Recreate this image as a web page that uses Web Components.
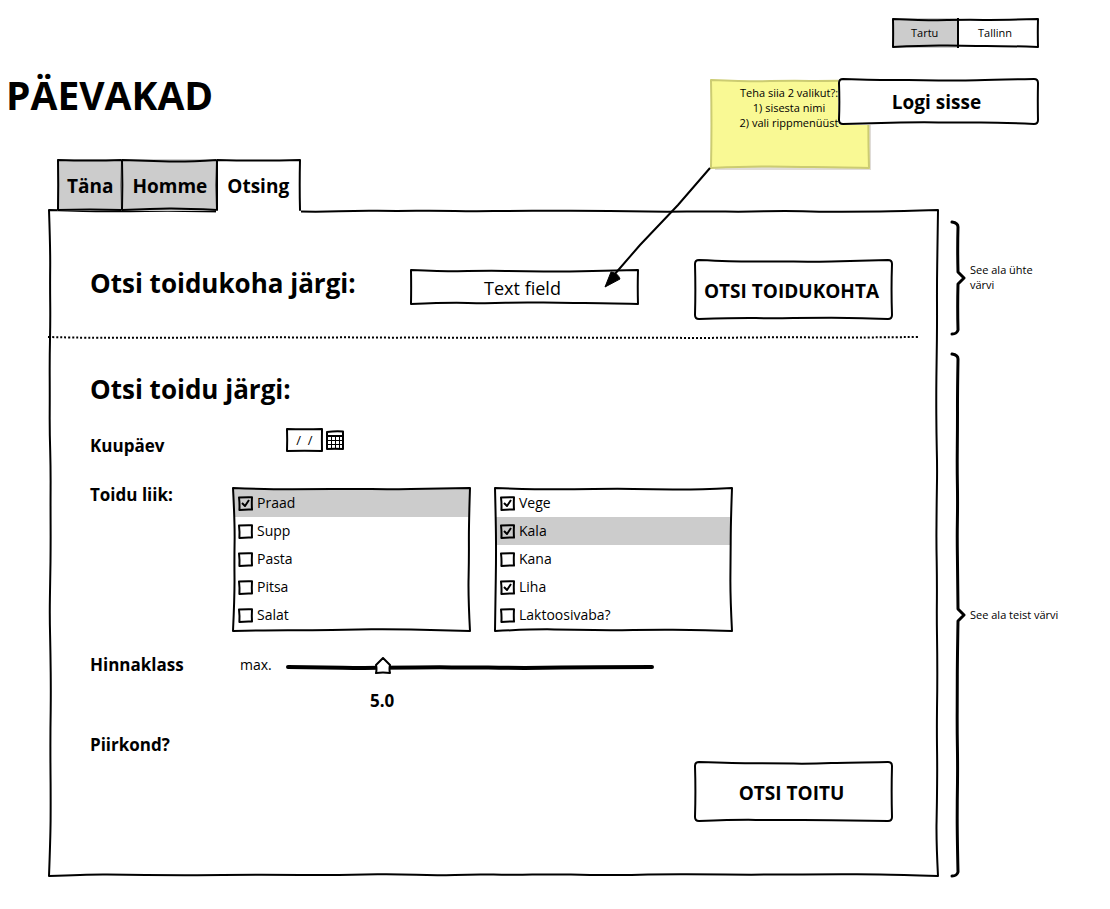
<!DOCTYPE html>
<html lang="et">
<head>
<meta charset="utf-8">
<title>Päevakad</title>
<style>
  body { margin: 0; background: #fff; color: #000; font-family: "Open Sans", "Noto Sans", sans-serif; }
</style>
</head>
<body>
<paevakad-page></paevakad-page>

<template id="page-template">
  <style>
    :host { display: block; padding: 18px 0 32px; }
    header { display: grid; grid-template-columns: 1fr auto auto; padding-right: 71px; padding-left: 6px; row-gap: 30px; }
    city-toggle { grid-column: 3; justify-self: end; width: 147px; }
    h1 { margin: 0; font-size: 39px; line-height: 34px; font-weight: 700; grid-row: 2; }
    sticky-note { grid-row: 2; margin-right: -32px; }
    .login { grid-row: 2; grid-column: 3; width: 201px; height: 47px; z-index: 1; }
    main { display: grid; grid-template-columns: 1fr 171px; padding-left: 48px; margin-top: 34px; }
    nav { grid-column: 1 / -1; display: flex; padding-left: 9px; margin-bottom: -2px; z-index: 1; }
    .panel { position: relative; }
    .place { display: grid; grid-template-columns: 320px 1fr 199px; padding: 50px 46px 17px 42px; align-items: start; }
    .place sketch-field { margin: 10px 55px 0 0; }
    h2 { margin: 0; font-size: 26px; line-height: 36px; font-weight: 700; }
    .place h2 { padding-top: 6px; }
    .food { padding: 33px 46px 55px 42px; display: flex; flex-direction: column; }
    .place sketch-button, .submit { height: 61px; }
    .submit { width: 199px; align-self: flex-end; margin-top: 4px; }
    form-row.date { margin-top: 21px; }
    form-row.kind { margin-top: 25px; }
    form-row.price { margin-top: 21px; }
    form-row.area { margin-top: 20px; }
    .lists { display: flex; gap: 23px; padding-top: 4px; }
    .lists check-list { flex: 0 1 239px; }
    .date-box { padding-left: 54px; height: 30px; display: flex; gap: 3px; }
    aside { display: flex; flex-direction: column; gap: 18px; padding: 12px 0 0 11px; }
    brace-note.tall { flex: 1; }
    brace-note.short { height: 114px; }
  </style>
  <header>
    <city-toggle></city-toggle>
    <h1>PÄEVAKAD</h1>
    <sticky-note>Teha siia 2 valikut?:<br>1) sisesta nimi<br>2) vali rippmenüüst</sticky-note>
    <sketch-button class="login" size="large" seed="3">Logi sisse</sketch-button>
  </header>
  <main>
    <nav>
      <sketch-tab seed="1">Täna</sketch-tab>
      <sketch-tab seed="4">Homme</sketch-tab>
      <sketch-tab seed="6" active>Otsing</sketch-tab>
    </nav>
    <sketch-frame class="panel" seed="9">
      <section class="place">
        <h2>Otsi toidukoha järgi:</h2>
        <sketch-field value="Text field" label="Otsi toidukoha järgi"></sketch-field>
        <sketch-button seed="5">OTSI TOIDUKOHTA</sketch-button>
      </section>
      <dotted-rule></dotted-rule>
      <section class="food">
        <h2>Otsi toidu järgi:</h2>
        <form-row class="date" label="Kuupäev" end>
          <date-field class="date-box"></date-field>
        </form-row>
        <form-row class="kind" label="Toidu liik:">
          <div class="lists">
            <check-list seed="2">
              <check-item checked selected>Praad</check-item>
              <check-item>Supp</check-item>
              <check-item>Pasta</check-item>
              <check-item>Pitsa</check-item>
              <check-item>Salat</check-item>
            </check-list>
            <check-list seed="7">
              <check-item checked>Vege</check-item>
              <check-item checked selected>Kala</check-item>
              <check-item>Kana</check-item>
              <check-item checked>Liha</check-item>
              <check-item>Laktoosivaba?</check-item>
            </check-list>
          </div>
        </form-row>
        <form-row class="price" label="Hinnaklass">
          <price-slider></price-slider>
        </form-row>
        <form-row class="area" label="Piirkond?"></form-row>
        <sketch-button class="submit" seed="8">OTSI TOITU</sketch-button>
      </section>
    </sketch-frame>
    <aside>
      <brace-note class="short">See ala ühte<br>värvi</brace-note>
      <brace-note class="tall">See ala teist värvi</brace-note>
    </aside>
  </main>
</template>

<script>
// Pseudo-random value in 0..1, the same on every load.
const noise = (seed, i) => {
  const v = Math.sin(seed * 12.9898 + i * 78.233) * 43758.5453;
  return v - Math.floor(v);
};

// Points of a hand-drawn line between two corners, bent by up to amp pixels along the normal.
function wobble(x1, y1, x2, y2, seed, amp) {
  const len = Math.hypot(x2 - x1, y2 - y1);
  const n = Math.max(2, Math.round(len / 38));
  const nx = -(y2 - y1) / (len || 1), ny = (x2 - x1) / (len || 1);
  const most = Math.min(amp, len / 45);
  const pts = [[x1, y1]];
  for (let i = 1; i < n; i++) {
    const t = i / n, d = most * (0.25 + 0.75 * noise(seed, i));
    pts.push([x1 + (x2 - x1) * t + nx * d, y1 + (y2 - y1) * t + ny * d]);
  }
  pts.push([x2, y2]);
  return pts;
}
function smooth(pts) {
  let d = '';
  for (let i = 1; i < pts.length - 1; i++) {
    const [x, y] = pts[i], [a, b] = pts[i + 1];
    const last = i === pts.length - 2;
    d += `Q${x.toFixed(1)} ${y.toFixed(1)} ${(last ? a : (x + a) / 2).toFixed(1)} ${(last ? b : (y + b) / 2).toFixed(1)}`;
  }
  return d;
}
// Closed sketchy rectangle; r rounds the corners. An open one has no bottom edge.
function sketchRect(w, h, seed, r = 0, amp = 2, open = false) {
  const a = 1, R = w - 1, B = h - 1;
  const sides = [
    [a + r, a, R - r, a], [R, a + r, R, B - r], [R - r, B, a + r, B], [a, B - r, a, a + r]
  ];
  const corners = [[R, a], [R, B], [a, B], [a, a]];
  if (open) {
    const up = wobble(a, B, a, a, seed, 0), top = wobble(a, a, R, a, seed + 1, amp), down = wobble(R, a, R, B, seed + 2, 1);
    return `M${a} ${B}${smooth(up)}${smooth(top)}${smooth(down)}`;
  }
  let d = `M${a + r} ${a}`;
  sides.forEach((s, i) => {
    d += smooth(wobble(...s, seed + i, amp));
    if (r) {
      const n = sides[(i + 1) % 4];
      d += `Q${corners[i][0]} ${corners[i][1]} ${n[0]} ${n[1]}`;
    }
  });
  return d + 'Z';
}

class Base extends HTMLElement {
  constructor() {
    super();
    this.attachShadow({ mode: 'open' });
  }
  connectedCallback() {
    if (this.shadowRoot.childNodes.length) return;
    this.shadowRoot.innerHTML = `<style>${this.css()}</style>${this.html()}`;
    this.ready();
  }
  css() { return ''; }
  html() { return '<slot></slot>'; }
  ready() {}
}

// An element whose outline is redrawn to fit its own box.
class Sketched extends Base {
  static base = `
    :host { display: block; position: relative; box-sizing: border-box; }
    svg.ink { position: absolute; inset: 0; width: 100%; height: 100%; overflow: visible; pointer-events: none; fill: none; stroke: #000; stroke-width: 2; stroke-linejoin: round; stroke-linecap: round; }
  `;
  static ink = '<svg class="ink" aria-hidden="true"><path/></svg>';
  get seed() { return Number(this.getAttribute('seed') || 1); }
  ready() {
    const draw = () => {
      if (this.offsetWidth) this.shadowRoot.querySelector('svg.ink path').setAttribute('d', this.outline(this.offsetWidth, this.offsetHeight));
    };
    new ResizeObserver(draw).observe(this);
    draw();
  }
  outline(w, h) { return sketchRect(w, h, this.seed); }
}

customElements.define('sketch-frame', class extends Sketched {
  css() { return Sketched.base; }
  html() { return Sketched.ink + '<slot></slot>'; }
});

customElements.define('sketch-button', class extends Sketched {
  css() { return Sketched.base + `
    button { width: 100%; height: 100%; padding: 2px 4px 0 0; border: 0; border-radius: 4px; background: #fff; color: inherit;
      font: 700 19px/28px "Open Sans", "Noto Sans", sans-serif; white-space: nowrap; cursor: pointer; }
    :host([size=large]) button { padding-top: 0; }
  `; }
  html() { return '<button type="button"><slot></slot></button>' + Sketched.ink; }
  outline(w, h) { return sketchRect(w, h, this.seed, 4); }
});

customElements.define('sketch-tab', class extends Sketched {
  css() { return Sketched.base + `
    :host { height: 52px; margin-right: -2px; }
    button { height: 52px; padding: 2px 11px 0; border: 0; background: #ccc; color: inherit;
      font: 700 19px/28px "Open Sans", "Noto Sans", sans-serif; cursor: pointer; }
    :host(:first-of-type) button { padding: 2px 10px 0; }
    :host([active]) button { height: 54px; padding: 0 12px 0 11px; background: #fff; }
  `; }
  html() { return '<button type="button"><slot></slot></button>' + Sketched.ink; }
  outline(w, h) { return sketchRect(w, h, this.seed, 0, 2, this.hasAttribute('active')); }
});

customElements.define('city-toggle', class extends Sketched {
  css() { return Sketched.base + `
    :host { display: flex; height: 30px; }
    button { border: 0; padding: 0 0 0 19px; text-align: left; background: #fff; color: #000;
      font: 400 11px/16px "Open Sans", "Noto Sans", sans-serif; }
    button:first-of-type { width: 67px; background: #ccc; border-right: 2px solid #000; }
    button:last-of-type { flex: 1; }
  `; }
  html() { return '<button type="button" aria-pressed="true">Tartu</button><button type="button" aria-pressed="false">Tallinn</button>' + Sketched.ink; }
});

customElements.define('sketch-field', class extends Sketched {
  css() { return Sketched.base + `
    input { display: block; box-sizing: border-box; width: 100%; height: 36px; border: 0; padding: 2px 8px 0 4px; background: #fff; text-align: center;
      color: #000; outline: 0; font: 400 18px/28px "Open Sans", "Noto Sans", sans-serif; }
  `; }
  html() { return `<input type="text" aria-label="${this.getAttribute('label')}" value="${this.getAttribute('value')}">` + Sketched.ink; }
});

customElements.define('dotted-rule', class extends Base {
  css() { return `
    :host { display: block; height: 1px; margin-right: 20px; }
    svg { display: block; width: 100%; height: 4px; overflow: visible; }
    path { fill: none; stroke: #000; stroke-width: 2; stroke-dasharray: 2 2; }
  `; }
  html() { return '<svg aria-hidden="true"><path/></svg>'; }
  ready() {
    const draw = () => {
      const w = this.offsetWidth;
      this.shadowRoot.querySelector('path').setAttribute('d', 'M0 0' + smooth(wobble(0, 0, w, 0, 5, 1)));
    };
    new ResizeObserver(draw).observe(this);
    draw();
  }
});

customElements.define('sticky-note', class extends Sketched {
  css() { return Sketched.base + `
    :host { width: 160px; height: 90px; margin-top: 1px; margin-bottom: -44px; padding: 6px 0 0; text-align: center;
      font: 400 11px/15px "Open Sans", "Noto Sans", sans-serif; }
    .paper { position: absolute; inset: 2px; background: #f9f994; box-shadow: 3px 3px 0 #e0dcd8; }
    .text { position: relative; padding-right: 2px; white-space: nowrap; }
    svg.ink { stroke: #cccc72; stroke-width: 2; }
    svg.arrow { position: absolute; right: 100%; top: 100%; width: 106px; height: 121px; margin-top: -1px; z-index: 2; overflow: visible; }
  `; }
  html() { return `<div class="paper"></div>${Sketched.ink}<div class="text"><slot></slot></div>
    <svg class="arrow" viewBox="0 0 106 121" aria-hidden="true">
      <path d="M106 0L74 37L36 77L10 107" fill="none" stroke="#000" stroke-width="2"/>
      <path d="M1 119L7 104Q14 105 16 111Z" stroke="#000" stroke-linejoin="round"/>
    </svg>`; }
});

customElements.define('brace-note', class extends Base {
  css() { return `
    :host { display: flex; align-items: center; font: 400 11px/15px "Open Sans", "Noto Sans", sans-serif; }
    svg { flex: none; width: 16px; height: 100%; margin-right: 4px; overflow: visible; align-self: stretch; }
    span { padding-bottom: 2px; }
    path { fill: none; stroke: #000; stroke-width: 3; stroke-linecap: round; stroke-linejoin: round; }
  `; }
  html() { return '<svg aria-hidden="true"><path/></svg><span><slot></slot></span>'; }
  ready() {
    const draw = () => {
      const h = this.offsetHeight, m = Math.round(h / 2);
      const d = 'M2 1Q8 2 8 6' + smooth(wobble(8, 6, 8, m - 6, 3, 1)) + `L14 ${m}L8 ${m + 6}` +
        smooth(wobble(8, m + 6, 8, h - 5, 8, 1)) + `Q7 ${h - 1} 2 ${h - 1}`;
      this.shadowRoot.querySelector('path').setAttribute('d', d);
    };
    new ResizeObserver(draw).observe(this);
    draw();
  }
});

customElements.define('form-row', class extends Base {
  css() { return `
    :host { display: grid; grid-template-columns: 142px 1fr; align-items: start; }
    :host([end]) { align-items: end; }
    .label { font: 700 17px/24px "Open Sans", "Noto Sans", sans-serif; }
  `; }
  html() { return `<span class="label">${this.getAttribute('label')}</span><slot></slot>`; }
  ready() { this.setAttribute('role', 'group'); this.setAttribute('aria-label', this.getAttribute('label')); }
});

customElements.define('date-field', class extends Base {
  css() { return `
    .box { position: relative; width: 37px; height: 24px; }
    input { box-sizing: border-box; width: 100%; height: 100%; border: 0; padding: 0; text-align: center; background: #fff; color: #000;
      font: 400 13px/20px "Open Sans", "Noto Sans", sans-serif; }
    .box svg { position: absolute; inset: 0; }
    button { width: 18px; height: 20px; margin-top: 2px; padding: 0; border: 0; background: none; }
    svg { display: block; overflow: visible; fill: none; stroke: #000; stroke-width: 2; stroke-linejoin: round; }
  `; }
  html() { return `
    <div class="box"><input type="text" aria-label="Kuupäev" value="/  /">
      <svg width="37" height="24" aria-hidden="true"><path d="${sketchRect(37, 24, 3, 0, 1)}"/></svg></div>
    <button type="button" aria-label="Ava kalender">
      <svg width="18" height="20" viewBox="0 0 18 20" aria-hidden="true">
        <path d="M1 2Q9 1 17 1.5L17 19Q9 18.5 1 19Z" fill="#fff"/>
        <path d="M1 6H17"/>
        <path d="M1 10.5H17M1 14.5H17M5.5 6V18M9.5 6V18M13.5 6V18" stroke-width="1"/>
      </svg>
    </button>`; }
});

customElements.define('check-list', class extends Sketched {
  css() { return Sketched.base + ':host { padding: 2px 2px 3px; }'; }
  html() { return '<slot></slot>' + Sketched.ink; }
});

customElements.define('check-item', class extends Base {
  css() { return `
    :host { display: block; }
    :host([selected]) { background: #ccc; }
    label { display: grid; grid-template-columns: 15px 1fr; column-gap: 4px; align-items: center; height: 28px; padding-left: 4px;
      font: 400 14px/20px "Open Sans", "Noto Sans", sans-serif; }
    input { appearance: none; grid-area: 1 / 1; width: 15px; height: 15px; margin: 0; }
    svg { grid-area: 1 / 1; width: 15px; height: 15px; pointer-events: none; fill: none; stroke: #000; stroke-width: 2; stroke-linejoin: round; overflow: visible; }
    .tick { visibility: hidden; }
    input:checked ~ svg .tick { visibility: visible; }
  `; }
  html() { return `<label>
      <input type="checkbox"${this.hasAttribute('checked') ? ' checked' : ''}>
      <svg viewBox="0 0 15 15" aria-hidden="true">
        <path d="M1 1.5Q8 1 14 1.2Q13.6 8 14 13.6Q7 13.4 1.4 14Q1.8 8 1 1.5Z"/>
        <path class="tick" d="M4 7L7 10L11 4"/>
      </svg>
      <span><slot></slot></span></label>`; }
});

customElements.define('price-slider', class extends Base {
  css() { return `
    :host { display: grid; grid-template-columns: 46px minmax(0, 368px); padding-left: 8px; }
    label { font: 400 14px/24px "Open Sans", "Noto Sans", sans-serif; }
    .track { position: relative; height: 24px; margin-top: 2px; }
    .track svg { position: absolute; inset: 0; width: 100%; height: 100%; overflow: visible; }
    path { fill: none; stroke: #000; stroke-width: 4; stroke-linecap: round; }
    input { appearance: none; position: relative; display: block; width: 100%; height: 24px; margin: 0; background: none; }
    input::-webkit-slider-runnable-track { height: 24px; background: none; }
    input::-webkit-slider-thumb { appearance: none; width: 18px; height: 18px; margin-top: 2px; border: 0;
      background: url("data:image/svg+xml,%3Csvg xmlns='http://www.w3.org/2000/svg' width='18' height='18'%3E%3Cpath d='M9 1L16 8Q15 12 16 16Q9 15 2 16Q3 12 2 8Z' fill='white' stroke='black' stroke-width='2' stroke-linejoin='round'/%3E%3C/svg%3E") no-repeat; }
    output { grid-column: 2; margin: 10px 0 0 84px; font: 700 17px/24px "Open Sans", "Noto Sans", sans-serif; }
  `; }
  html() { return `<label for="max">max.</label>
    <div class="track"><svg aria-hidden="true"><path/></svg><input id="max" type="range" min="0" max="20" step="1" value="5"></div>
    <output for="max">5.0</output>`; }
  ready() {
    const track = this.shadowRoot.querySelector('.track'), input = this.shadowRoot.querySelector('input');
    const draw = () => {
      const w = track.offsetWidth;
      this.shadowRoot.querySelector('path').setAttribute('d', 'M2 12' + smooth(wobble(2, 12, w - 2, 12, 4, 1)));
    };
    new ResizeObserver(draw).observe(track);
    draw();
    input.addEventListener('input', () => {
      this.shadowRoot.querySelector('output').value = Number(input.value).toFixed(1);
    });
  }
});

customElements.define('paevakad-page', class extends HTMLElement {
  constructor() {
    super();
    this.attachShadow({ mode: 'open' }).append(document.getElementById('page-template').content.cloneNode(true));
  }
});
</script>
</body>
</html>
